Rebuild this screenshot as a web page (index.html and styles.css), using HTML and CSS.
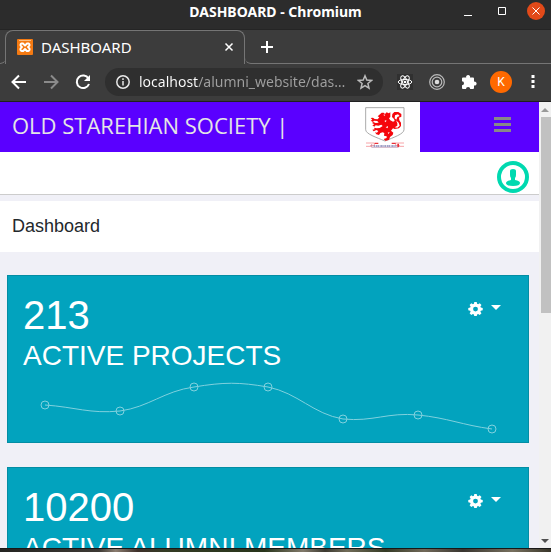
FILE: index.html
```html
<!DOCTYPE html>
<html lang="en">
<head>
<meta charset="utf-8">
<meta name="viewport" content="width=device-width, initial-scale=1">
<title>DASHBOARD</title>
<link rel="stylesheet" href="styles.css">
</head>
<body>
<svg class="sprite" aria-hidden="true">
  <symbol id="gear" viewBox="0 0 16 16">
    <path fill-rule="evenodd" d="M6.7 1h2.6l.4 2 1.1.5 1.7-1.1 1.9 1.8-1.2 1.7.5 1.1 2 .4v2.5l-2 .4-.5 1.1 1.2 1.7-1.9 1.9-1.7-1.2-1.1.5-.4 2H6.700l-.4-2-1.100-.5L3.500 15 1.700 13.100l1.100-1.700-.5-1.100-2-.4V7.400l2-.4.5-1.100L1.700 4.200l1.800-1.800 1.700 1.100L6.300 3zM8 6a2.600 2.600 0 1 0 0 5.200A2.600 2.600 0 0 0 8 6z"/>
  </symbol>
</svg>

<header class="titlebar">
  <span class="titlebar-name">DASHBOARD - Chromium</span>
  <div class="window-buttons">
    <button class="window-button" aria-label="Minimize"><svg viewBox="0 0 18 18"><path d="M5 13.500h8"/></svg></button>
    <button class="window-button" aria-label="Maximize"><svg viewBox="0 0 18 18"><path d="M5.500 5.500h7v7h-7z"/></svg></button>
    <button class="window-button close" aria-label="Close"><svg viewBox="0 0 18 18"><path d="M5.500 5.500l7 7m0-7l-7 7"/></svg></button>
  </div>
</header>

<nav class="tabs">
  <div class="tab-edge left"></div>
  <div class="tab">
    <svg class="favicon" viewBox="0 0 16 16"><rect width="16" height="16" rx="1" fill="#f47a12"/><path d="M2 1.500h12" stroke="#ffd0a0" stroke-width=".8"/><path d="M6 4.500H4.500a1.500 1.500 0 0 0-.5 2.600L5 8l-1 1a1.700 1.700 0 0 0 .7 3h1.500l1.800-2 1.800 2h1.500a1.700 1.700 0 0 0 .7-3l-1-1 1-.9a1.500 1.500 0 0 0-.5-2.600H10L8 6.600z" fill="none" stroke="#fff" stroke-width="1.900" stroke-linejoin="round"/></svg>
    <span class="tab-name">DASHBOARD</span>
    <button class="tab-close" aria-label="Close tab"><svg viewBox="0 0 10 10"><path d="M1.500 1.500l7 7m0-7l-7 7"/></svg></button>
  </div>
  <div class="tab-strip"><button class="tab-new" aria-label="New tab"><svg viewBox="0 0 12 12"><path d="M6 0v12M0 6h12"/></svg></button></div>
</nav>

<div class="toolbar">
  <button class="tool" aria-label="Back"><svg viewBox="0 0 16 16"><path d="M15 8H2M8 1.500L1.500 8 8 14.500"/></svg></button>
  <button class="tool dim" aria-label="Forward"><svg viewBox="0 0 16 16"><path d="M1 8h13M8 1.500L14.500 8 8 14.500"/></svg></button>
  <button class="tool" aria-label="Reload"><svg viewBox="0 0 16 16"><path d="M13.500 4.500A6.300 6.300 0 1 0 14 10"/><path class="solid" d="M15 1v6H9z"/></svg></button>
  <div class="address">
    <svg class="info" viewBox="0 0 16 16"><circle cx="8" cy="8" r="6.200"/><path d="M8 7v4.500M8 4.300v1.600"/></svg>
    <input class="address-text" type="text" aria-label="Address" value="localhost/alumni_website/das…">
    <button class="star" aria-label="Bookmark"><svg viewBox="0 0 16 16"><path d="M8 1.800l1.800 4.300 4.700.4-3.600 3 1.100 4.600L8 11.700l-4 2.400 1.100-4.600-3.600-3 4.700-.4z"/></svg></button>
  </div>
  <div class="extensions">
    <button class="tool ext" aria-label="React tools"><svg viewBox="0 0 16 16"><rect class="plate" width="16" height="16"/><g class="thin"><ellipse cx="8" cy="8" rx="6.800" ry="2.600"/><ellipse cx="8" cy="8" rx="6.800" ry="2.600" transform="rotate(60 8 8)"/><ellipse cx="8" cy="8" rx="6.800" ry="2.600" transform="rotate(120 8 8)"/></g><circle class="solid" cx="8" cy="8" r="1.300"/></svg></button>
    <button class="tool ext" aria-label="Tracker"><svg viewBox="0 0 16 16"><g class="rings"><circle cx="8" cy="8" r="7.300"/><circle cx="8" cy="8" r="4.800"/></g><circle class="core" cx="8" cy="8" r="2.300"/></svg></button>
    <button class="tool ext" aria-label="Extensions"><svg viewBox="0 0 16 16"><path class="solid" d="M1 4.500Q1 3.500 2 3.500h3.200a2 2 0 1 1 3.800 0h3q1 0 1 1v3.200a2 2 0 1 1 0 3.800v2.500q0 1-1 1H9.200a2.100 2.100 0 0 0-4.200 0H2q-1 0-1-1v-2.700a2 2 0 1 0 0-4z"/></svg></button>
    <button class="profile" aria-label="Profile">K</button>
    <button class="tool more" aria-label="Menu"><svg viewBox="0 0 16 16"><rect class="solid" x="6.500" y="1" width="3" height="3"/><rect class="solid" x="6.500" y="6" width="3" height="3"/><rect class="solid" x="6.500" y="11" width="3" height="3"/></svg></button>
  </div>
</div>

<div class="viewport">
  <main class="page">
    <header class="brandbar">
      <a class="brand" href="#">OLD STAREHIAN SOCIETY |</a>
      <a class="crest" href="#" aria-label="Society crest">
        <svg viewBox="0 0 120 126">
          <path d="M2 2h115v66c0 13-31 23-57 34C34 91 2 81 2 68z" fill="#fff" stroke="#999" stroke-width="2.500"/>
          <path fill="#f5060c" d="M50 17h6l4 4 5-5 6 3 5-3v14l-4 4 4 6 8 4 5-2-2-6-6-6 1-9 6-6h12l9 6v8l-7 3 1 8 5 7v10l-6 7-13 2-5-2-6 7 7 6-2 7-8 6-3 9-11 2-5-5 9-3v-5l-8-2 1-8-5-2-7 2-4 6-8-2-4-6 6 1 4-5-6-3-8 4-4-5 7-1-2-5 8 2 9-1 9-6-4-4-9 3-8-1-4 4-6-4 6-3-7-4 4-3 7 3 9-1-4-5-10-1-3 4-7-4 5-3-5-5 7-1 5 4 9 1 5-6-5-3z"/>
          <g fill="#fff"><path d="M56 22l5 2-4 3zM90 25l9-3 5 5-7 3-3 8-5-4zM93 40l8 7 3 9-7 6-8-1 8-5v-7zM62 61l7-4-1 7zM58 42l6-3-1 7zM68 77l6-2-3 6z"/></g>
          <g fill="none" stroke="#f3767b" stroke-width="2"><path d="M3 108h25v8H15M3 118h17v-6M117 108H92v8h13M117 118h-17v-6"/><path d="M20 112v9h80v-9" stroke="#b68ba8"/></g>
          <path d="M29 107h11v4H29zM80 107h12v4H80zM97 110h5v10h-5z" fill="#e93038"/>
          <path d="M26 117h68" stroke="#8585b5" stroke-width="4" stroke-dasharray="5 2 3 1"/>
        </svg>
      </a>
      <button class="menu" aria-label="Toggle navigation"><span></span><span></span><span></span></button>
    </header>
    <div class="userbar">
      <a class="user" href="#" aria-label="Account"><svg viewBox="0 0 32 32"><circle cx="16" cy="16" r="14" fill="#fff" stroke="#00d9b0" stroke-width="4"/><path fill="#00d9b0" d="M13 10q0-2 3-2t3 2v4q0 2-1 3v2q5 1 5 3 0 3-7 3t-7-3q0-2 5-3v-2q-1-1-1-3z"/></svg></a>
    </div>
    <div class="heading"><h1>Dashboard</h1></div>
    <div class="cards">
      <section class="card">
        <div class="card-head">
          <div class="figure">213</div>
          <button class="options" aria-label="Project options"><svg><use href="#gear"/></svg><i class="caret"></i></button>
        </div>
        <div class="label">ACTIVE PROJECTS</div>
        <svg class="chart" viewBox="-1 -3 490 69" role="img" aria-label="Active projects by month">
          <path d="M21 29C51 31 66 38 96 35C125 31 140 15 170 11C200 6 215 6 244 11C274 17 289 38 319 43C349 46 364 36 394 39C424 42 438 49 468 53"/>
          <circle cx="21" cy="29" r="4"/><circle cx="96" cy="35" r="4"/><circle cx="170" cy="11" r="4"/><circle cx="244" cy="11" r="4"/><circle cx="319" cy="43" r="4"/><circle cx="394" cy="39" r="4"/><circle cx="468" cy="53" r="4"/>
        </svg>
      </section>
      <section class="card">
        <div class="card-head">
          <div class="figure">10200</div>
          <button class="options" aria-label="Member options"><svg><use href="#gear"/></svg><i class="caret"></i></button>
        </div>
        <div class="label">ACTIVE ALUMNI MEMBERS</div>
        <svg class="chart" viewBox="-1 -3 490 69" role="img" aria-label="Active members by month"></svg>
      </section>
    </div>
  </main>
  <div class="scrollbar" aria-hidden="true">
    <i class="arrow up"></i>
    <div class="track"><div class="thumb"></div></div>
    <i class="arrow down"></i>
  </div>
</div>
<div class="desktop"></div>
</body>
</html>
```

FILE: styles.css
```css
* { box-sizing: border-box; }

body {
  margin: 0;
  height: 100vh;
  display: flex;
  flex-direction: column;
  overflow: hidden;
  background: #3c3c3c;
  color: #fff;
  font-family: "Liberation Sans", Arial, sans-serif;
}

button {
  margin: 0;
  padding: 0;
  border: 0;
  background: none;
  color: inherit;
  font: inherit;
}

svg { display: block; }
.sprite { display: none; }

/* Window title */
.titlebar {
  flex: none;
  height: 30px;
  padding: 0 6px;
  display: grid;
  grid-template-columns: 1fr auto 1fr;
  align-items: center;
  background: #2c2c2c;
  border-bottom: 1px solid #252525;
}
.titlebar-name {
  grid-column: 2;
  padding-bottom: 6px;
  font: bold 14px/20px "Noto Sans", sans-serif;
}
.window-buttons {
  display: flex;
  justify-content: flex-end;
  gap: 16px;
  padding-bottom: 7px;
}
.window-button { width: 18px; height: 18px; border-radius: 50%; }
.window-button svg { fill: none; stroke: #fff; }
.window-button.close { background: #e24a19; }

/* Tabs */
.tabs { flex: none; display: flex; height: 34px; }
.tab-edge {
  width: 6px;
  border-bottom: 1px solid #757575;
  border-bottom-right-radius: 6px;
}
.tab {
  flex: 0 1 240px;
  display: flex;
  align-items: center;
  gap: 8px;
  padding: 0 10px 2px 11px;
  margin-left: -1px;
  border: 1px solid #757575;
  border-bottom: 0;
  border-radius: 8px 8px 0 0;
}
.favicon { width: 16px; height: 16px; }
.tab-name { flex: 1; font: 15px/20px "Noto Sans", sans-serif; }
.tab-close { width: 10px; height: 10px; }
.tab-close svg, .tab-new svg { fill: none; stroke: #fff; stroke-width: 2; }
.tab-close svg { stroke-width: 1.5; }
.tab-strip {
  flex: 1;
  display: flex;
  align-items: center;
  padding-left: 16px;
  border-bottom: 1px solid #757575;
  border-bottom-left-radius: 6px;
}
.tab-new { width: 12px; height: 12px; }

/* Toolbar */
.toolbar {
  flex: none;
  height: 38px;
  padding: 0 10px 2px 11px;
  display: flex;
  align-items: center;
  gap: 16px;
  border-bottom: 1px solid #202020;
}
.tool { flex: none; width: 16px; height: 16px; }
.tool svg { fill: none; stroke: #fff; stroke-width: 2; }
.tool.dim svg { stroke: #8b8b8b; }
.tool .solid { fill: #fff; stroke: none; }
.tool .thin { stroke-width: 1; }
.tool .plate { fill: #303030; stroke: none; }
.tool .rings { stroke: #bbb; stroke-width: 1.2; }
.tool .core { fill: #ddd; stroke: none; }
.address {
  flex: 1;
  min-width: 0;
  height: 28px;
  padding: 0 10px;
  margin-left: -2px;
  display: flex;
  align-items: center;
  gap: 8px;
  border-radius: 14px;
  background: #2f2f2f;
}
.info { flex: none; width: 16px; height: 16px; fill: none; stroke: #e8e8e8; stroke-width: 1.5; }
.address-text {
  flex: 1;
  min-width: 0;
  padding: 0;
  border: 0;
  outline: 0;
  background: linear-gradient(to right, #fff 59px, #a0a0a0 59px);
  background-clip: text;
  -webkit-background-clip: text;
  color: transparent;
  font: 14px/20px "Noto Sans", sans-serif;
}
.star { flex: none; width: 16px; height: 16px; }
.star svg { fill: none; stroke: #bbb; stroke-width: 1.5; }
.extensions { display: flex; align-items: center; gap: 16px; margin-left: -2px; }
.profile {
  width: 22px;
  height: 22px;
  margin: 0 -3px;
  border-radius: 50%;
  background: #ff6900;
  font: 12px/22px Roboto, sans-serif;
}

/* Page */
.viewport { flex: 1; min-height: 0; display: flex; background: #f0f0f7; }
.page { flex: 1; min-width: 0; overflow: hidden; }
.brandbar {
  height: 50px;
  padding: 0 28px 0 12px;
  display: flex;
  align-items: center;
  justify-content: space-between;
  background: #5a00ff;
}
.brand {
  flex: 1;
  color: #e4e5e6;
  font: 400 22px/30px "Open Sans", sans-serif;
  text-decoration: none;
  white-space: nowrap;
  padding-bottom: 5px;
}
.crest {
  width: 70px;
  height: 50px;
  margin-right: 74px;
  padding: 5px 15px;
  background: #fff;
}
.crest svg { width: 40px; height: 42px; }
.menu { width: 17px; display: grid; gap: 3px; padding-bottom: 5px; }
.menu span { height: 3px; background: #888; }
.userbar {
  height: 43px;
  padding: 0 10px;
  display: flex;
  align-items: center;
  justify-content: flex-end;
  background: #fff;
  border-bottom: 1px solid #ccc;
}
.user { padding-top: 8px; }
.user svg { width: 32px; height: 32px; }
.heading { margin-top: 6px; padding: 14px 12px 15px; background: #fff; }
.heading h1 { margin: 0; color: #23282c; font-size: 18px; line-height: 22px; font-weight: 400; }
.cards { padding: 23px 10px 0 7px; display: grid; gap: 24px; }
.card { padding: 15px 15px 0; background: #02a3be; border: 1px solid #038da4; }
.card-head { display: flex; justify-content: space-between; align-items: flex-start; }
.figure { font-size: 40px; line-height: 48px; }
.options { display: flex; align-items: center; gap: 8px; padding: 10px 12px; }
.options svg { width: 15px; height: 15px; fill: #fff; }
.caret { border: 5px solid transparent; border-top-color: #fff; border-bottom: 0; margin-bottom: 3px; }
.label { font-size: 28px; line-height: 34px; white-space: nowrap; }
.chart { width: 100%; height: auto; fill: none; stroke: #80d1de; stroke-width: 1; }

/* Scrollbar */
.scrollbar { width: 12px; display: flex; flex-direction: column; align-items: center; background: #f1f1f1; }
.arrow { border: 4px solid transparent; margin: 6px 0 5px; }
.arrow.up { border-top: 0; border-bottom-color: #999; }
.arrow.down { border-bottom: 0; border-top-color: #505050; }
.track { flex: 1; width: 10px; margin-left: 2px; }
.thumb { height: 47%; background: #c1c1c1; }

.desktop {
  flex: none;
  height: 4px;
  border-top: 1px solid #181818;
  background: linear-gradient(to right, #242421, #3c3934 18%, #8b7d70 21%, #3d302a 25%, #333b24 30%, #28351b 48%, #827a6b 55%, #3b3930 59%, #716c58 63%, #343a25 70%, #716959 77%, #38352f 84%, #77705e 93%, #383529);
}
```
